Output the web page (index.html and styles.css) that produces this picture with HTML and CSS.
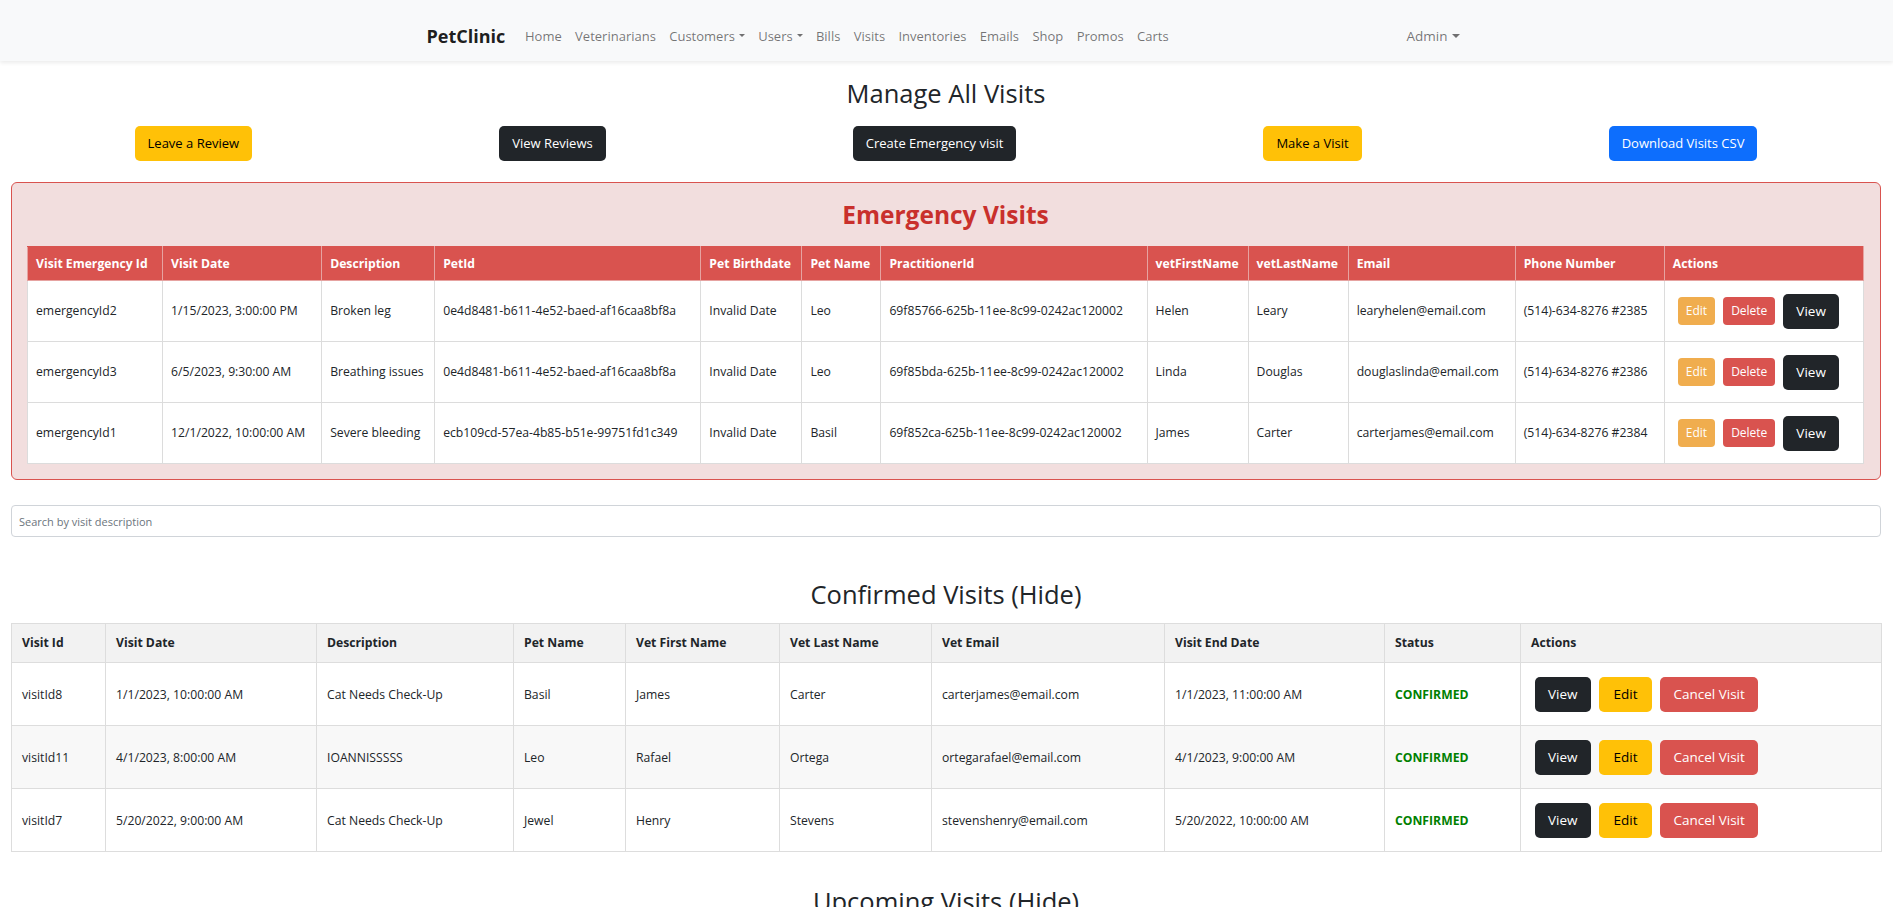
FILE: index.html
```html
<!DOCTYPE html>
<html lang="en">
<head>
<meta charset="utf-8">
<title>PetClinic - Manage All Visits</title>
<link rel="stylesheet" href="styles.css">
</head>
<body>
<nav class="navbar">
  <div class="nav-inner">
    <a class="brand" href="#">PetClinic</a>
    <ul class="nav-links">
      <li><a class="nav-link" href="#">Home</a></li>
      <li><a class="nav-link" href="#">Veterinarians</a></li>
      <li><a class="nav-link dropdown" href="#">Customers</a></li>
      <li><a class="nav-link dropdown" href="#">Users</a></li>
      <li><a class="nav-link" href="#">Bills</a></li>
      <li><a class="nav-link" href="#">Visits</a></li>
      <li><a class="nav-link" href="#">Inventories</a></li>
      <li><a class="nav-link" href="#">Emails</a></li>
      <li><a class="nav-link" href="#">Shop</a></li>
      <li><a class="nav-link" href="#">Promos</a></li>
      <li><a class="nav-link" href="#">Carts</a></li>
    </ul>
    <div class="nav-right"><a class="nav-link nav-admin dropdown" href="#">Admin</a></div>
  </div>
</nav>

<main class="page">
  <h2 class="page-title">Manage All Visits</h2>
  <div class="top-actions">
    <button class="btn btn-warning">Leave a Review</button>
    <button class="btn btn-dark">View Reviews</button>
    <button class="btn btn-dark">Create Emergency visit</button>
    <button class="btn btn-warning">Make a Visit</button>
    <button class="btn btn-primary">Download Visits CSV</button>
  </div>

  <section class="emergency">
    <h2 class="emergency-title">Emergency Visits</h2>
    <table class="table emergency-table">
      <colgroup>
        <col class="ec-id"><col class="ec-date"><col class="ec-desc"><col class="ec-pet"><col class="ec-bd"><col class="ec-name"><col class="ec-prac"><col class="ec-first"><col class="ec-last"><col class="ec-email"><col class="ec-phone"><col class="ec-act">
      </colgroup>
      <thead>
        <tr>
          <th>Visit Emergency Id</th><th>Visit Date</th><th>Description</th><th>PetId</th><th>Pet Birthdate</th><th>Pet Name</th><th>PractitionerId</th><th>vetFirstName</th><th>vetLastName</th><th>Email</th><th>Phone Number</th><th>Actions</th>
        </tr>
      </thead>
      <tbody>
        <tr>
          <td>emergencyId2</td><td>1/15/2023, 3:00:00 PM</td><td>Broken leg</td><td>0e4d8481-b611-4e52-baed-af16caa8bf8a</td><td>Invalid Date</td><td>Leo</td><td>69f85766-625b-11ee-8c99-0242ac120002</td><td>Helen</td><td>Leary</td><td>learyhelen@email.com</td><td>(514)-634-8276 #2385</td>
          <td><div class="actions"><button class="btn btn-sm btn-orange">Edit</button><button class="btn btn-sm btn-danger">Delete</button><button class="btn btn-dark btn-row">View</button></div></td>
        </tr>
        <tr>
          <td>emergencyId3</td><td>6/5/2023, 9:30:00 AM</td><td>Breathing issues</td><td>0e4d8481-b611-4e52-baed-af16caa8bf8a</td><td>Invalid Date</td><td>Leo</td><td>69f85bda-625b-11ee-8c99-0242ac120002</td><td>Linda</td><td>Douglas</td><td>douglaslinda@email.com</td><td>(514)-634-8276 #2386</td>
          <td><div class="actions"><button class="btn btn-sm btn-orange">Edit</button><button class="btn btn-sm btn-danger">Delete</button><button class="btn btn-dark btn-row">View</button></div></td>
        </tr>
        <tr>
          <td>emergencyId1</td><td>12/1/2022, 10:00:00 AM</td><td>Severe bleeding</td><td>ecb109cd-57ea-4b85-b51e-99751fd1c349</td><td>Invalid Date</td><td>Basil</td><td>69f852ca-625b-11ee-8c99-0242ac120002</td><td>James</td><td>Carter</td><td>carterjames@email.com</td><td>(514)-634-8276 #2384</td>
          <td><div class="actions"><button class="btn btn-sm btn-orange">Edit</button><button class="btn btn-sm btn-danger">Delete</button><button class="btn btn-dark btn-row">View</button></div></td>
        </tr>
      </tbody>
    </table>
  </section>

  <input class="search" type="text" placeholder="Search by visit description">

  <h2 class="section-title">Confirmed Visits (Hide)</h2>
  <table class="table visits-table">
    <colgroup>
      <col class="vc-id"><col class="vc-date"><col class="vc-desc"><col class="vc-pet"><col class="vc-first"><col class="vc-last"><col class="vc-email"><col class="vc-end"><col class="vc-status"><col class="vc-act">
    </colgroup>
    <thead>
      <tr>
        <th>Visit Id</th><th>Visit Date</th><th>Description</th><th>Pet Name</th><th>Vet First Name</th><th>Vet Last Name</th><th>Vet Email</th><th>Visit End Date</th><th>Status</th><th>Actions</th>
      </tr>
    </thead>
    <tbody>
      <tr>
        <td>visitId8</td><td>1/1/2023, 10:00:00 AM</td><td>Cat Needs Check-Up</td><td>Basil</td><td>James</td><td>Carter</td><td>carterjames@email.com</td><td>1/1/2023, 11:00:00 AM</td><td class="status-confirmed">CONFIRMED</td>
        <td><div class="actions actions-wide"><button class="btn btn-dark btn-row">View</button><button class="btn btn-warning btn-row btn-edit">Edit</button><button class="btn btn-danger btn-row">Cancel Visit</button></div></td>
      </tr>
      <tr>
        <td>visitId11</td><td>4/1/2023, 8:00:00 AM</td><td>IOANNISSSSS</td><td>Leo</td><td>Rafael</td><td>Ortega</td><td>ortegarafael@email.com</td><td>4/1/2023, 9:00:00 AM</td><td class="status-confirmed">CONFIRMED</td>
        <td><div class="actions actions-wide"><button class="btn btn-dark btn-row">View</button><button class="btn btn-warning btn-row btn-edit">Edit</button><button class="btn btn-danger btn-row">Cancel Visit</button></div></td>
      </tr>
      <tr>
        <td>visitId7</td><td>5/20/2022, 9:00:00 AM</td><td>Cat Needs Check-Up</td><td>Jewel</td><td>Henry</td><td>Stevens</td><td>stevenshenry@email.com</td><td>5/20/2022, 10:00:00 AM</td><td class="status-confirmed">CONFIRMED</td>
        <td><div class="actions actions-wide"><button class="btn btn-dark btn-row">View</button><button class="btn btn-warning btn-row btn-edit">Edit</button><button class="btn btn-danger btn-row">Cancel Visit</button></div></td>
      </tr>
    </tbody>
  </table>

  <h2 class="section-title section-title-next">Upcoming Visits (Hide)</h2>
</main>
</body>
</html>
```

FILE: styles.css
```css
* {
  box-sizing: border-box;
}

html,
body {
  margin: 0;
  padding: 0;
}

body {
  font-family: "Open Sans", "Noto Sans", "Liberation Sans", sans-serif;
  font-size: 14px;
  line-height: 1.5;
  color: #212529;
  background: #ffffff;
}

/* ---------- navbar ---------- */
.navbar {
  height: 61px;
  padding-top: 12px;
  background: #f8f9fa;
  box-shadow: 0 2px 4px rgba(0, 0, 0, 0.08);
}

.nav-inner {
  width: 1040px;
  height: 49px;
  margin: 0 auto;
  display: flex;
  align-items: center;
}

.brand {
  font-size: 18px;
  font-weight: 700;
  color: rgba(0, 0, 0, 0.9);
  text-decoration: none;
  margin-right: 13px;
}

.nav-links {
  display: flex;
  list-style: none;
  margin: 0;
  padding: 0;
}

.nav-link {
  display: block;
  padding: 0 6.7px;
  font-size: 13px;
  color: rgba(0, 0, 0, 0.55);
  text-decoration: none;
}

.nav-admin {
  font-size: 13.5px;
  padding-right: 5px;
}

.nav-right {
  margin-left: auto;
  padding-right: 2px;
}

.dropdown::after {
  content: "";
  display: inline-block;
  margin-left: 0.3em;
  vertical-align: 0.255em;
  border-top: 0.3em solid;
  border-right: 0.3em solid transparent;
  border-left: 0.3em solid transparent;
}

/* ---------- page ---------- */
.page {
  padding: 0 12px 0 11px;
}

.page-title {
  margin: 15px 0 16px;
  font-size: 25.5px;
  font-weight: 500;
  line-height: 34px;
  text-align: center;
}

.top-actions {
  display: flex;
  justify-content: space-around;
  margin-bottom: 21px;
}

/* ---------- buttons ---------- */
.btn {
  font-family: inherit;
  font-size: 13px;
  line-height: 21px;
  padding: 6px 12px;
  border: 1px solid transparent;
  border-radius: 5px;
  cursor: pointer;
  white-space: nowrap;
}

.btn-row {
  font-size: 13.5px;
}

.btn-edit {
  padding: 6px 14px;
}

.btn-sm {
  font-size: 12px;
  line-height: 18px;
  padding: 4px 7px;
  border-radius: 4px;
}

.btn-warning {
  background: #ffc107;
  color: #000;
}

.btn-dark {
  background: #212529;
  color: #fff;
}

.btn-primary {
  background: #0d6efd;
  color: #fff;
}

.btn-danger {
  background: #d9534f;
  color: #fff;
}

.btn-orange {
  background: #f0ad4e;
  color: #fff;
}

/* ---------- emergency box ---------- */
.emergency {
  background: #f2dede;
  border: 1px solid #d9534f;
  border-radius: 6px;
  padding: 15px 16px 15px 15px;
  margin-bottom: 25px;
}

.emergency-title {
  margin: 0 0 14px;
  font-size: 24.5px;
  font-weight: 700;
  line-height: 34px;
  color: #c9302c;
  text-align: center;
}

/* ---------- tables ---------- */
.table {
  width: 100%;
  border-collapse: collapse;
  table-layout: fixed;
  font-size: 12.2px;
}

.table th,
.table td {
  text-align: left;
  vertical-align: middle;
  white-space: nowrap;
}

.emergency-table th {
  background: #d9534f;
  color: #fff;
  font-weight: 700;
  line-height: 20px;
  padding: 7px 8px 6px;
  border: 1px solid #e6a3a1;
  border-top-color: #d9534f;
}

.emergency-table td {
  background: #fff;
  line-height: 20px;
  padding: 12.5px 8px;
  border: 1px solid #dcdcdc;
}

.ec-id { width: 135px; }
.ec-date { width: 159px; }
.ec-desc { width: 113px; }
.ec-pet { width: 266px; }
.ec-bd { width: 101px; }
.ec-name { width: 79px; }
.ec-prac { width: 266px; }
.ec-first { width: 101px; }
.ec-last { width: 100px; }
.ec-email { width: 167px; }
.ec-phone { width: 149px; }
.ec-act { width: 199px; }

.actions {
  display: flex;
  align-items: center;
  gap: 8px;
  padding-left: 5px;
}

.actions-wide {
  padding-left: 4px;
}

/* ---------- search ---------- */
.search {
  display: block;
  width: 100%;
  height: 32px;
  padding: 4px 7px;
  font-family: inherit;
  font-size: 11px;
  color: #212529;
  border: 1px solid #d0d4d9;
  border-radius: 4px;
  outline: none;
}

.search::placeholder {
  color: #6c757d;
}

.section-title {
  margin: 40px 0 12px;
  font-size: 25.5px;
  font-weight: 500;
  line-height: 34px;
  text-align: center;
}

.section-title-next {
  margin-top: 32px;
}

.visits-table th {
  background: #f2f2f2;
  font-weight: 700;
  line-height: 20px;
  padding: 9px 10px;
  border: 1px solid #dddddd;
}

.visits-table td {
  line-height: 20px;
  padding: 14px 10px 13px;
  border: 1px solid #dddddd;
}

.visits-table tbody tr:nth-child(even) td {
  background: #f8f8f8;
}

.status-confirmed {
  color: #008000;
  font-weight: 700;
}

.vc-id { width: 94px; }
.vc-date { width: 211px; }
.vc-desc { width: 197px; }
.vc-pet { width: 112px; }
.vc-first { width: 154px; }
.vc-last { width: 152px; }
.vc-email { width: 233px; }
.vc-end { width: 220px; }
.vc-status { width: 136px; }
.vc-act { width: 361px; }
```
